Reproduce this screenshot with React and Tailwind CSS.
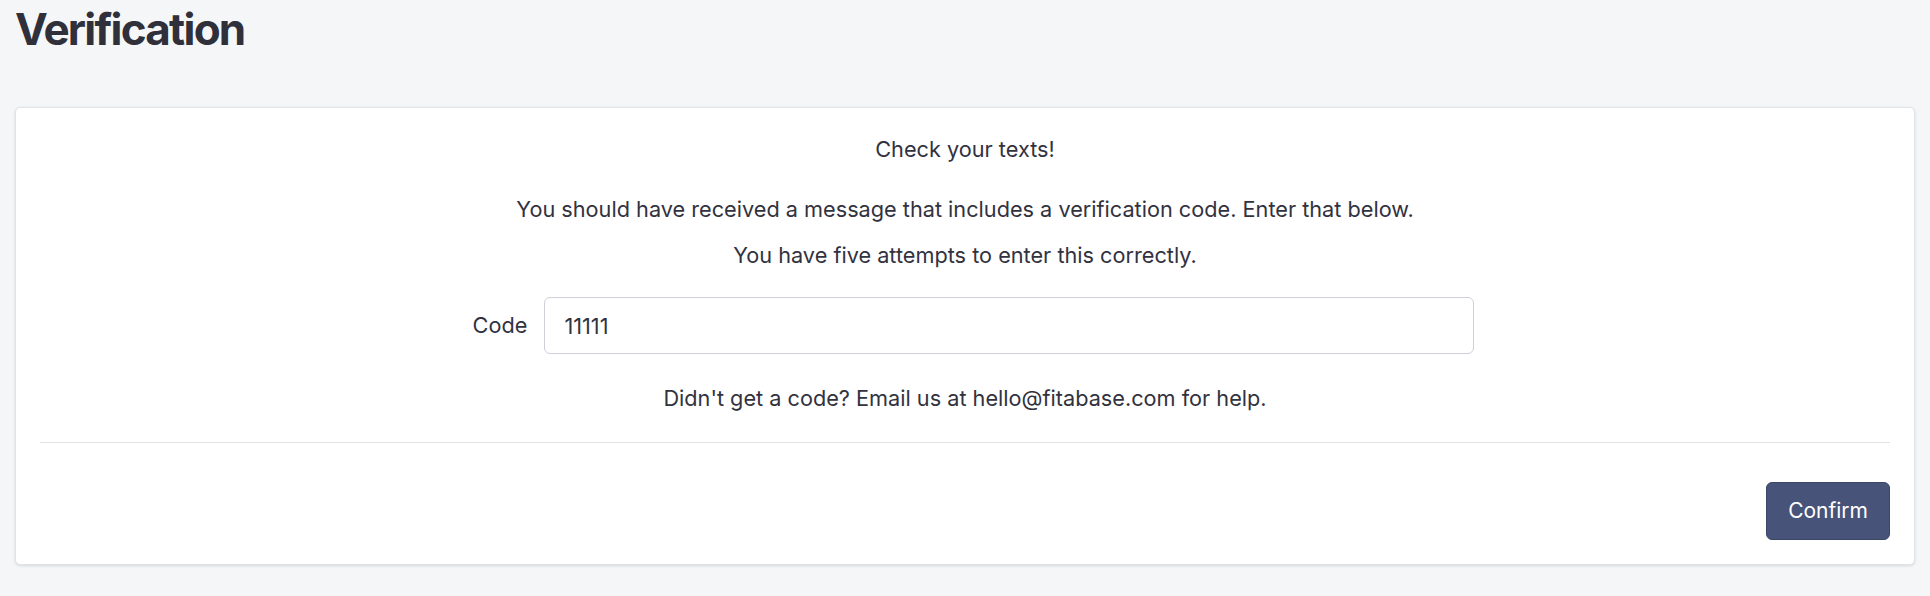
export default function App() {
  return (
    <div className="min-h-screen bg-[#f5f6f8] px-[15px] pb-8 font-['Inter',sans-serif] text-[#32323f]">
      <h1 className="pt-[7px] text-[44px] leading-[45px] font-bold tracking-[-0.04em] text-[#30303b]">
        Verification
      </h1>

      <div className="mt-[55px] rounded-[5px] border border-[#e2e3e8] bg-white px-[24px] pt-[25px] pb-[24px] shadow-[0_1px_3px_rgba(0,0,0,0.12)]">
        <div className="text-center text-[21.7px] leading-[33px]">
          <p className="mb-[27px]">Check your texts!</p>
          <p className="mb-[13px]">
            You should have received a message that includes a verification code. Enter that below.
          </p>
          <p>You have five attempts to enter this correctly.</p>
        </div>

        <div className="mt-[25px] ml-[17px] flex items-center justify-center gap-[17px]">
          <label htmlFor="code" className="text-[21.7px]">Code</label>
          <input
            id="code"
            type="text"
            defaultValue="11111"
            className="h-[57px] w-[930px] rounded-[6px] border border-[#cfcfd9] px-[19px] text-[21.7px] text-[#32323f] outline-none"
          />
        </div>

        <p className="mt-[28px] text-center text-[21.7px] leading-[33px]">
          Didn't get a code? Email us at hello@fitabase.com for help.
        </p>

        <div className="mt-[27px] border-t border-[#e2e2e7]" />

        <div className="mt-[39px] flex justify-end">
          <button
            type="button"
            className="h-[58px] rounded-[6px] border border-[#3c4668] bg-[#48537a] px-[21px] text-[21px] text-white"
          >
            Confirm
          </button>
        </div>
      </div>
    </div>
  );
}
